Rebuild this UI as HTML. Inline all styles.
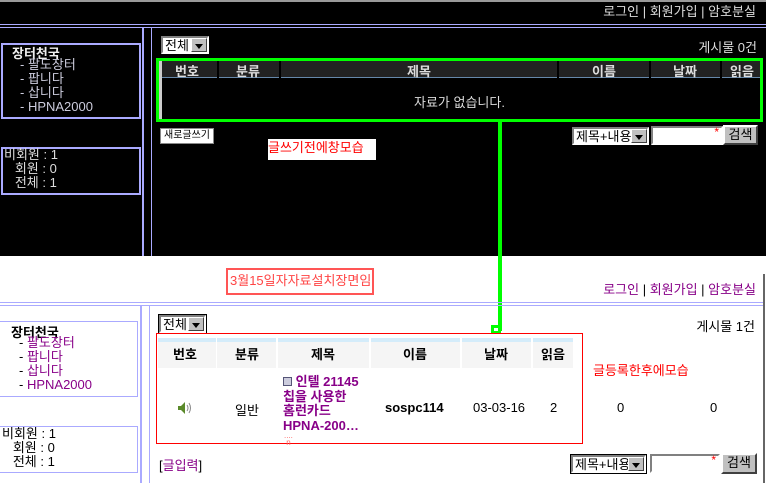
<!DOCTYPE html>
<html><head><meta charset="utf-8"><style>
*{margin:0;padding:0;box-sizing:border-box}
body{width:766px;height:483px;position:relative;overflow:hidden;background:#fff;font-family:"Liberation Sans","Noto Sans CJK KR","NanumGothic",sans-serif;font-size:12px}
.a{position:absolute;white-space:nowrap}
.b{position:absolute}
.sel{position:absolute;background:#fff;border:2px solid;border-color:#808080 #fff #fff #808080;outline:1px solid #000;font-size:13px;color:#000;padding-left:2px;line-height:15px}
.sel i{position:absolute;right:0;top:0;width:16px;height:100%;background:#c0c0c0;border:1px solid;border-color:#fff #404040 #404040 #fff}
.sel i:after{content:"";position:absolute;left:3px;top:5px;border:4px solid transparent;border-top:5px solid #000}
.btn{position:absolute;background:#c0c0c0;border:2px solid;border-color:#fff #404040 #404040 #fff;text-align:center;font-size:13px;line-height:15px;color:#000}
.inp{position:absolute;background:#fff;border:2px solid;border-color:#808080 #fff #fff #808080}
.inp:after{content:"*";position:absolute;right:2px;top:-3px;color:red;font-size:12px}
</style></head><body>
<div class="b" style="left:0;top:0;width:766px;height:256px;background:#000"></div>
<div class="b" style="left:0;top:0;width:766px;height:2px;background:#999"></div>
<div class="a" style="right:10px;top:1px;color:#ddd;font-size:13px">로그인 | 회원가입 | 암호분실</div>
<div class="b" style="left:0;top:24px;width:766px;height:1px;background:#aaf"></div>
<div class="b" style="left:0;top:27px;width:766px;height:1px;background:#aaf"></div>
<div class="b" style="left:142px;top:27px;width:2px;height:229px;background:#aaf"></div>
<div class="b" style="left:151px;top:27px;width:1px;height:229px;background:#aaf"></div>
<div class="b" style="left:1px;top:43px;width:140px;height:76px;border:2px solid #aaf"></div>
<div class="a" style="left:12px;top:43px;color:#eee;font-weight:bold;font-size:13px">장터천국</div>
<div class="a" style="left:20px;top:58px;color:#ccd;line-height:14px;font-size:13px">- 팔도장터<br>- 팝니다<br>- 삽니다<br>- HPNA2000</div>
<div class="b" style="left:1px;top:147px;width:140px;height:48px;border:2px solid #aaf"></div>
<div class="a" style="left:4px;top:148px;color:#ddd;line-height:14px;font-size:13px">비회원 : 1<br>&nbsp;&nbsp; 회원 : 0<br>&nbsp;&nbsp; 전체 : 1</div>
<div class="sel" style="left:161px;top:36px;width:48px;height:18px">전체<i></i></div>
<div class="a" style="right:9px;top:37px;color:#ddd;font-size:13px">게시물 0건</div>
<div class="b" style="left:156px;top:58px;width:607px;height:64px;border:3px solid #0f0"></div>
<div class="b" style="left:159px;top:61px;width:3px;height:58px;background:#ccc"></div>
<div class="b" style="left:162px;top:61px;width:598px;height:17px;background:#222;border-bottom:1px solid #68a"></div>
<div class="b" style="left:217px;top:61px;width:2px;height:17px;background:#000"></div>
<div class="b" style="left:279px;top:61px;width:2px;height:17px;background:#000"></div>
<div class="b" style="left:557px;top:61px;width:2px;height:17px;background:#000"></div>
<div class="b" style="left:649px;top:61px;width:2px;height:17px;background:#000"></div>
<div class="b" style="left:720px;top:61px;width:2px;height:17px;background:#000"></div>
<div class="a" style="left:175px;top:61px;color:#ddd;font-weight:bold;font-size:13px">번호</div>
<div class="a" style="left:236px;top:61px;color:#ddd;font-weight:bold;font-size:13px">분류</div>
<div class="a" style="left:407px;top:61px;color:#ddd;font-weight:bold;font-size:13px">제목</div>
<div class="a" style="left:592px;top:61px;color:#ddd;font-weight:bold;font-size:13px">이름</div>
<div class="a" style="left:673px;top:61px;color:#ddd;font-weight:bold;font-size:13px">날짜</div>
<div class="a" style="left:730px;top:61px;color:#ddd;font-weight:bold;font-size:13px">읽음</div>
<div class="a" style="left:414px;top:92px;color:#ddd;font-size:13px">자료가 없습니다.</div>
<div class="b" style="left:160px;top:128px;width:54px;height:16px;background:#fff;border:1px solid #888;font-size:10px;line-height:13px;text-align:center">새로글쓰기</div>
<div class="b" style="left:268px;top:139px;width:108px;height:21px;background:#fff"></div>
<div class="a" style="left:268px;top:137px;color:red;font-size:13px">글쓰기전에창모습</div>
<div class="sel" style="left:572px;top:127px;width:77px;height:18px">제목+내용<i></i></div>
<div class="inp" style="left:651px;top:126px;width:72px;height:19px"></div>
<div class="btn" style="left:723px;top:125px;width:35px;height:20px">검색</div>
<div class="b" style="left:498px;top:121px;width:4px;height:210px;background:#0f0"></div>
<div class="b" style="left:491px;top:325px;width:10px;height:9px;border:3px solid #0f0;background:#fff"></div>
<div class="b" style="left:226px;top:268px;width:148px;height:27px;border:2px solid #f55"></div>
<div class="a" style="left:230px;top:270px;color:#f44;font-size:13px">3월15일자자료설치장면임</div>
<div class="a" style="right:10px;top:279px;color:#808;font-size:13px">로그인 <span style="color:#000">|</span> 회원가입 <span style="color:#000">|</span> 암호분실</div>
<div class="b" style="left:763px;top:274px;width:2px;height:209px;background:#666"></div>
<div class="b" style="left:0;top:302px;width:763px;height:1px;background:#aaf"></div>
<div class="b" style="left:0;top:305px;width:763px;height:1px;background:#aaf"></div>
<div class="b" style="left:140px;top:305px;width:2px;height:178px;background:#aaf"></div>
<div class="b" style="left:149px;top:305px;width:1px;height:178px;background:#aaf"></div>
<div class="b" style="left:-2px;top:321px;width:140px;height:76px;border:1px solid #aaf"></div>
<div class="a" style="left:11px;top:322px;color:#000;font-weight:bold;font-size:13px">장터천국</div>
<div class="a" style="left:19px;top:336px;color:#808;line-height:14px;font-size:13px"><span style="color:#000">-</span> 팔도장터<br><span style="color:#000">-</span> 팝니다<br><span style="color:#000">-</span> 삽니다<br><span style="color:#000">-</span> HPNA2000</div>
<div class="b" style="left:-2px;top:426px;width:140px;height:47px;border:1px solid #aaf"></div>
<div class="a" style="left:2px;top:427px;color:#000;line-height:14px;font-size:13px">비회원 : 1<br>&nbsp;&nbsp; 회원 : 0<br>&nbsp;&nbsp; 전체 : 1</div>
<div class="sel" style="left:159px;top:315px;width:47px;height:18px">전체<i></i></div>
<div class="a" style="right:11px;top:316px;color:#000;font-size:13px">게시물 1건</div>
<div class="b" style="left:156px;top:333px;width:427px;height:111px;border:1px solid red"></div>
<div class="b" style="left:158px;top:338px;width:415px;height:30px;background:#f5f5f5"></div>
<div class="b" style="left:158px;top:338px;width:415px;height:4px;background:#d4ecfa"></div>
<div class="b" style="left:216px;top:338px;width:1px;height:30px;background:#fff"></div>
<div class="b" style="left:276px;top:338px;width:2px;height:30px;background:#fff"></div>
<div class="b" style="left:369px;top:338px;width:2px;height:30px;background:#fff"></div>
<div class="b" style="left:460px;top:338px;width:2px;height:30px;background:#fff"></div>
<div class="b" style="left:531px;top:338px;width:2px;height:30px;background:#fff"></div>
<div class="a" style="left:173px;top:344px;font-weight:bold;font-size:13px">번호</div>
<div class="a" style="left:235px;top:344px;font-weight:bold;font-size:13px">분류</div>
<div class="a" style="left:311px;top:344px;font-weight:bold;font-size:13px">제목</div>
<div class="a" style="left:403px;top:344px;font-weight:bold;font-size:13px">이름</div>
<div class="a" style="left:484px;top:344px;font-weight:bold;font-size:13px">날짜</div>
<div class="a" style="left:541px;top:344px;font-weight:bold;font-size:13px">읽음</div>
<svg class="b" style="left:178px;top:402px" width="14" height="12" viewBox="0 0 14 12"><path d="M0 4h3l4-4v12l-4-4H0z" fill="#5a8a2a"/><path d="M9 3q2 3 0 6M11 1q3 5 0 10" stroke="#888" fill="none"/></svg>
<div class="a" style="left:235px;top:400px;font-size:13px">일반</div>
<div class="a" style="left:283px;top:375px;color:#808;font-weight:bold;font-size:13px;line-height:14.5px"><span style="display:inline-block;width:9px;height:9px;border:1px solid #557;background:#ccd;vertical-align:0"></span> 인텔 21145<br>칩을 사용한<br>홈런카드<br>HPNA-200…</div>
<div class="a" style="left:284px;top:432px;color:#f66;font-size:8px;line-height:7px">....<br>&nbsp;n</div>
<div class="a" style="left:385px;top:400px;font-weight:bold;font-size:13px">sospc114</div>
<div class="a" style="left:473px;top:400px;font-size:13px">03-03-16</div>
<div class="a" style="left:550px;top:400px;font-size:13px">2</div>
<div class="a" style="left:617px;top:400px;font-size:13px">0</div>
<div class="a" style="left:710px;top:400px;font-size:13px">0</div>
<div class="a" style="left:593px;top:360px;color:red;font-size:13px">글등록한후에모습</div>
<div class="a" style="left:159px;top:455px;color:#000;font-size:13px">[<span style="color:#808">글입력</span>]</div>
<div class="sel" style="left:571px;top:455px;width:75px;height:18px">제목+내용<i></i></div>
<div class="inp" style="left:650px;top:454px;width:70px;height:19px"></div>
<div class="btn" style="left:721px;top:453px;width:36px;height:21px">검색</div>
</body></html>
